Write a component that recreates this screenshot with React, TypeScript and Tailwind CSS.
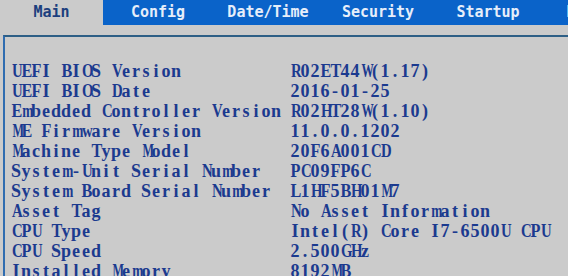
const tabs = ["Config", "Date/Time", "Security", "Startup", "Restart"];

const rows: [string, string][] = [
  ["UEFI BIOS Version", "R02ET44W(1.17)"],
  ["UEFI BIOS Date", "2016-01-25"],
  ["Embedded Controller Version", "R02HT28W(1.10)"],
  ["ME Firmware Version", "11.0.0.1202"],
  ["Machine Type Model", "20F6A001CD"],
  ["System-Unit Serial Number", "PC09FP6C"],
  ["System Board Serial Number", "L1HF5BH01M7"],
  ["Asset Tag", "No Asset Information"],
  ["CPU Type", "Intel(R) Core I7-6500U CPU"],
  ["CPU Speed", "2.500GHz"],
  ["Installed Memory", "8192MB"],
];

// squeeze wide serif glyphs so they fit the 10px cell
function squeeze(c: string) {
  if ("MW".includes(c)) return "scale-x-[0.68]";
  if (c === "m") return "scale-x-[0.74]";
  if ("ACDGHKNOQRUVXYw".includes(c)) return "scale-x-[0.82]";
  if ("BEFLPTZ".includes(c)) return "scale-x-[0.9]";
  return "";
}

// BIOS font is a serif monospace; put each glyph in a fixed 10px cell
function Mono({ text }: { text: string }) {
  return (
    <span className="whitespace-pre">
      {text.split("").map((c, i) => (
        <span key={i} className={`inline-block w-[10px] text-center ${squeeze(c)}`}>
          {c}
        </span>
      ))}
    </span>
  );
}

export default function App() {
  return (
    <div className="w-[568px] h-[276px] overflow-hidden bg-[#cbcbcb]">
      {/* top tab bar */}
      <div className="flex h-[25px] font-['DejaVu_Sans_Mono',monospace] text-[15px] font-bold leading-[25px]">
        <div className="w-[103px] shrink-0 text-center text-[#1c3f7e]">Main</div>
        <div className="flex flex-1 bg-[#0a63c9]">
          {tabs.map((t) => (
            <div key={t} className="w-[110px] shrink-0 text-center text-[#e6eefa]">
              {t}
            </div>
          ))}
        </div>
      </div>

      {/* content panel */}
      <div className="mt-[10px] ml-[3px] h-[300px] border-t-2 border-l-2 border-t-[#2d5f86] border-l-[#2f6cb0] pt-[24px] pl-[6px]">
        <div className="font-['Liberation_Serif',serif] text-[18px] font-bold leading-[20px] text-[#1b3a8f]">
          {rows.map(([k, v]) => (
            <div key={k} className="flex h-[20px] whitespace-nowrap">
              <div className="w-[279px] shrink-0">
                <Mono text={k} />
              </div>
              <div>
                <Mono text={v} />
              </div>
            </div>
          ))}
        </div>
      </div>
    </div>
  );
}
